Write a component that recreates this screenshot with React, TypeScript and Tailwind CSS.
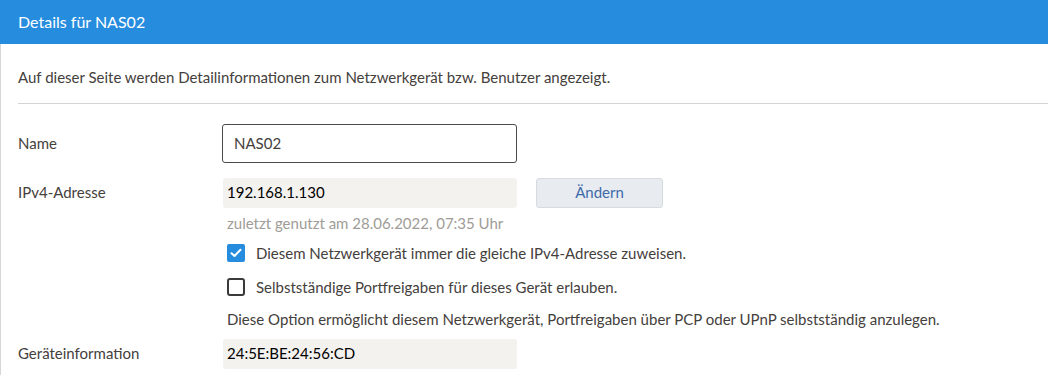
import {useState} from 'react';

const Check = ({checked, onToggle}: {checked: boolean; onToggle: () => void}) => (
  <button
    type="button"
    onClick={onToggle}
    className={
      checked
        ? 'flex h-[18px] w-[18px] shrink-0 items-center justify-center rounded-[2px] bg-[#268cde]'
        : 'flex h-[18px] w-[18px] shrink-0 items-center justify-center rounded-[3px] border-2 border-[#3a3a3a] bg-white'
    }
  >
    {checked && (
      <svg width="12" height="10" viewBox="0 0 12 10" fill="none">
        <path d="M1.5 5.2 L4.5 8 L10.5 1.8" stroke="white" strokeWidth="2" strokeLinecap="round" strokeLinejoin="round" />
      </svg>
    )}
  </button>
);

const App = () => {
  const [fixedIp, setFixedIp] = useState(true);
  const [portFw, setPortFw] = useState(false);
  const [name, setName] = useState('NAS02');

  return (
    <div className="h-[375px] w-[1048px] overflow-hidden bg-white font-['Lato',sans-serif] text-[15px] text-[#44403c]">
      <div className="flex h-[44px] items-center bg-[#268cde] px-[18px] text-[16px] text-white">
        Details für NAS02
      </div>
      <div className="h-[331px] border-l border-[#d6d6d2] pl-[17px]">
        <p className="pt-[22px] pb-[14px]">
          Auf dieser Seite werden Detailinformationen zum Netzwerkgerät bzw. Benutzer angezeigt.
        </p>
        <div className="border-t border-[#d4d4d4]" />

        <div className="mt-[20px] flex items-center">
          <span className="w-[204px]">Name</span>
          <input
            className="h-[39px] w-[295px] rounded-[3px] border border-[#4a4a4a] px-[11px] text-[15px] text-[#44403c] outline-none"
            value={name}
            onChange={(e) => setName(e.target.value)}
          />
        </div>

        <div className="mt-[15px] flex items-center">
          <span className="w-[205px]">IPv4-Adresse</span>
          <div className="flex h-[30px] w-[294px] items-center rounded-[3px] bg-[#f4f2ef] px-[4px] text-black">
            192.168.1.130
          </div>
          <button
            type="button"
            className="ml-[19px] h-[30px] w-[127px] rounded-[3px] border border-[#d6dbe0] bg-[#e8ecf0] text-[#3d6aa8]"
          >
            Ändern
          </button>
        </div>

        <div className="ml-[209px]">
          <p className="mt-[4px] text-[#a09c98]">zuletzt genutzt am 28.06.2022, 07:35 Uhr</p>
          <label className="mt-[8px] flex items-center gap-[11px]">
            <Check checked={fixedIp} onToggle={() => setFixedIp(!fixedIp)} />
            <span>Diesem Netzwerkgerät immer die gleiche IPv4-Adresse zuweisen.</span>
          </label>
          <label className="mt-[11px] flex items-center gap-[11px]">
            <Check checked={portFw} onToggle={() => setPortFw(!portFw)} />
            <span>Selbstständige Portfreigaben für dieses Gerät erlauben.</span>
          </label>
          <p className="mt-[10px]">
            Diese Option ermöglicht diesem Netzwerkgerät, Portfreigaben über PCP oder UPnP selbstständig anzulegen.
          </p>
        </div>

        <div className="mt-[8px] flex items-center">
          <span className="w-[205px]">Geräteinformation</span>
          <div className="flex h-[30px] w-[294px] items-center rounded-[3px] bg-[#f4f2ef] px-[4px] text-black">
            24:5E:BE:24:56:CD
          </div>
        </div>
      </div>
    </div>
  );
};

export default App;
